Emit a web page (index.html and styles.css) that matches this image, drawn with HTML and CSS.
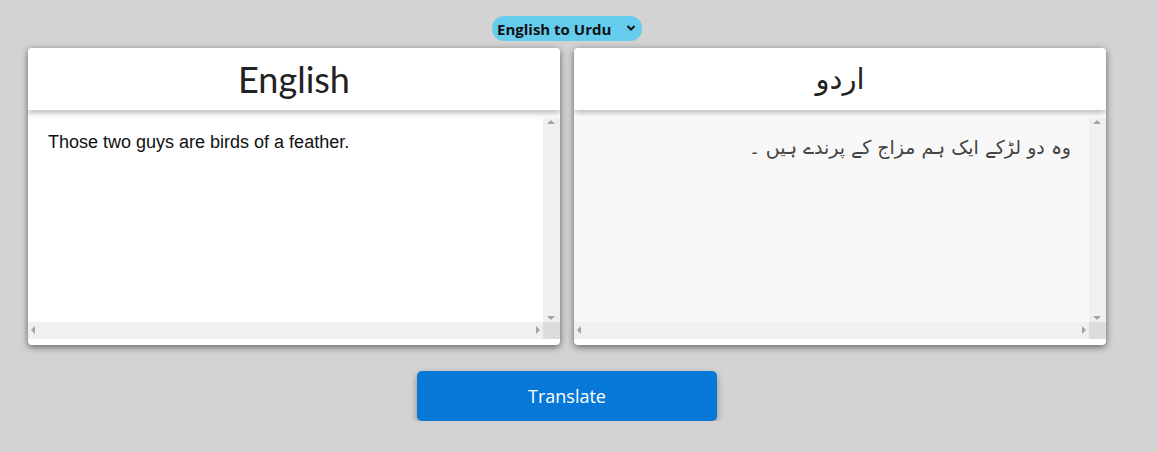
FILE: index.html
```html
<!DOCTYPE html>
<html lang="en">
<head>
<meta charset="utf-8">
<title>Translator</title>
<link rel="stylesheet" href="styles.css">
</head>
<body>
<div class="app">
  <div class="lang-select">
    <span class="lang-label">English to Urdu</span>
    <svg class="chev" width="10" height="8" viewBox="0 0 10 8"><path d="M1.5 2 L5 5.5 L8.5 2" fill="none" stroke="#111" stroke-width="2"/></svg>
  </div>
  <div class="panels">
    <div class="card">
      <div class="card-head"><h2 class="title">English</h2></div>
      <div class="box">
        <div class="box-text">Those two guys are birds of a feather.</div>
        <div class="vbar"><span class="arr up"></span><span class="arr down"></span></div>
        <div class="hbar"><span class="arr left"></span><span class="arr right"></span></div>
        <div class="corner"></div>
      </div>
    </div>
    <div class="card">
      <div class="card-head"><h2 class="title urdu-title" dir="rtl">اردو</h2></div>
      <div class="box readonly">
        <div class="box-text urdu" dir="rtl">وہ دو لڑکے ایک ہم مزاج کے پرندے ہیں ۔</div>
        <div class="vbar"><span class="arr up"></span><span class="arr down"></span></div>
        <div class="hbar"><span class="arr left"></span><span class="arr right"></span></div>
        <div class="corner"></div>
      </div>
    </div>
  </div>
  <button class="translate">Translate</button>
</div>
</body>
</html>
```

FILE: styles.css
```css
html, body {
  margin: 0;
  padding: 0;
  background: #d3d3d3;
}
.app {
  width: 1134px;
  display: flex;
  flex-direction: column;
  align-items: center;
  padding-top: 16px;
}
.lang-select {
  width: 150px;
  height: 25px;
  box-sizing: border-box;
  background: #66ccee;
  border-radius: 12px;
  display: flex;
  align-items: center;
  justify-content: space-between;
  padding: 0 6px 0 5px;
  font-family: "Open Sans", "DejaVu Sans", sans-serif;
  font-weight: 700;
  font-size: 15px;
  color: #111;
}
.chev { margin-top: -2px; }
.panels {
  display: flex;
  gap: 14px;
  margin-top: 7px;
}
.card {
  width: 532px;
  height: 297px;
  background: #fff;
  border-radius: 4px;
  box-shadow: 0 2px 7px rgba(0, 0, 0, 0.55);
  display: flex;
  flex-direction: column;
  overflow: hidden;
}
.card-head {
  height: 62px;
  flex: none;
  background: #fff;
  box-shadow: 0 3px 6px rgba(0, 0, 0, 0.28);
  position: relative;
  z-index: 1;
  display: flex;
  align-items: center;
  justify-content: center;
}
.title {
  margin: 0;
  font-family: Lato, "Open Sans", sans-serif;
  font-weight: 400;
  font-size: 36px;
  color: #222;
}
.urdu-title {
  font-family: "DejaVu Sans", sans-serif;
  font-size: 29px;
}
.box {
  margin-top: 8px;
  height: 221px;
  display: grid;
  grid-template-columns: 1fr 17px;
  grid-template-rows: 1fr 17px;
  background: #fff;
}
.box.readonly { background: #f8f8f8; }
.box-text {
  padding: 14px 20px;
  font-family: "Liberation Sans", Arial, sans-serif;
  font-size: 18px;
  color: #111;
}
.box-text.urdu {
  font-family: "DejaVu Sans", "Liberation Sans", sans-serif;
  font-size: 19px;
  color: #444;
  padding: 18px 18px 0 18px;
}
.vbar, .hbar {
  background: #f0f0f0;
  position: relative;
}
.corner { background: #dcdcdc; }
.arr {
  position: absolute;
  width: 0;
  height: 0;
  border: 4px solid transparent;
}
.arr.up { top: 2px; left: 4px; border-bottom-color: #a3a3a3; border-top-width: 0; }
.arr.down { bottom: 2px; left: 4px; border-top-color: #a3a3a3; border-bottom-width: 0; }
.arr.left { left: 3px; top: 4px; border-right-color: #a3a3a3; border-left-width: 0; }
.arr.right { right: 3px; top: 4px; border-left-color: #a3a3a3; border-right-width: 0; }
.translate {
  margin-top: 26px;
  width: 300px;
  height: 50px;
  border: 0;
  border-radius: 5px;
  background: #0878d8;
  color: #fff;
  font-family: "Open Sans", sans-serif;
  font-size: 18px;
  box-shadow: 0 3px 7px rgba(0, 0, 0, 0.35);
}
```
